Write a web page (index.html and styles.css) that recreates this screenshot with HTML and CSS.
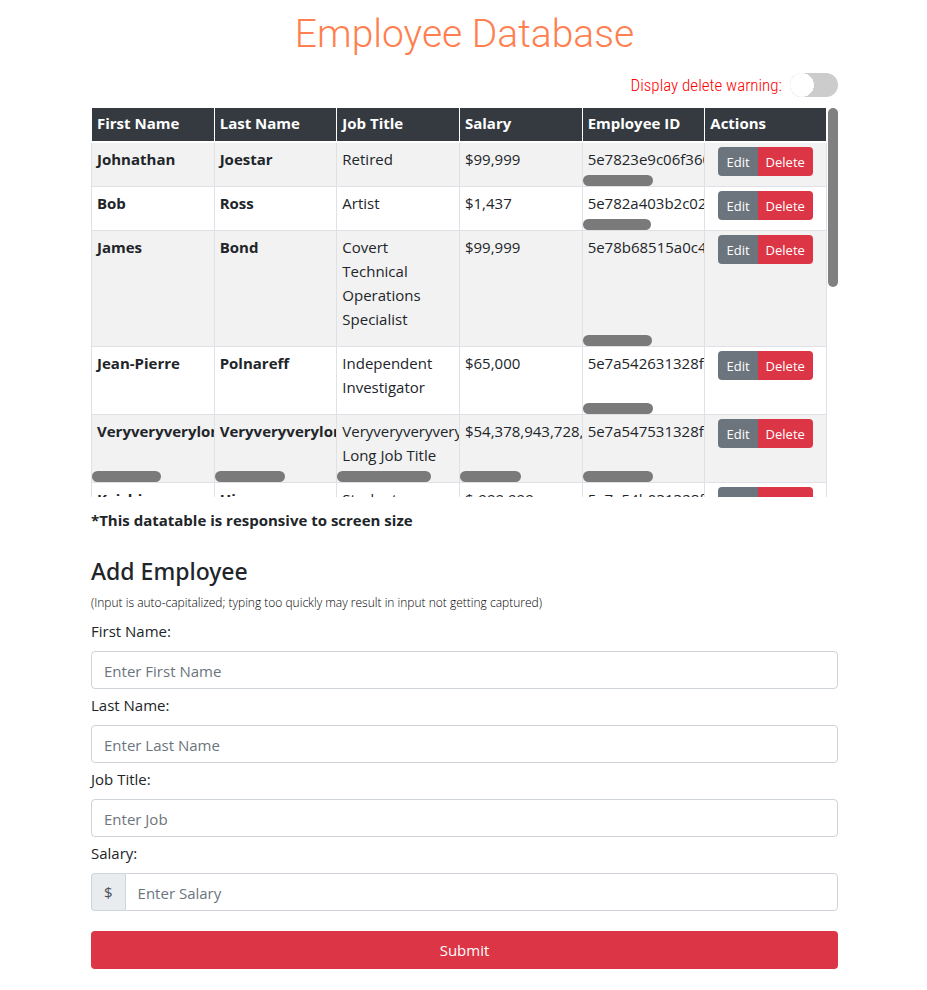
FILE: index.html
```html
<!DOCTYPE html>
<html lang="en">
<head>
<meta charset="utf-8">
<title>Employee Database</title>
<link rel="stylesheet" href="styles.css">
</head>
<body>
<main class="page">
  <h1 class="title">Employee Database</h1>
  <div class="warning">
    <label class="warning-label" for="warn">Display delete warning:</label>
    <input class="switch" id="warn" type="checkbox" role="switch">
  </div>
  <div class="table-view">
    <div class="table-body">
    <table class="employees">
      <thead>
        <tr><th>First Name</th><th>Last Name</th><th>Job Title</th><th>Salary</th><th>Employee ID</th><th>Actions</th></tr>
      </thead>
      <tbody>
        <tr>
          <td class="strong"><div class="cell">Johnathan</div></td>
          <td class="strong"><div class="cell">Joestar</div></td>
          <td><div class="cell">Retired</div></td>
          <td><div class="cell">$99,999</div></td>
          <td><div class="cell">5e7823e9c06f360</div><span class="thumb" style="width:58%"></span></td>
          <td><div class="actions"><button class="edit" type="button">Edit</button><button class="delete" type="button">Delete</button></div></td>
        </tr>
        <tr>
          <td class="strong"><div class="cell">Bob</div></td>
          <td class="strong"><div class="cell">Ross</div></td>
          <td><div class="cell">Artist</div></td>
          <td><div class="cell">$1,437</div></td>
          <td><div class="cell">5e782a403b2c02</div><span class="thumb" style="width:56%"></span></td>
          <td><div class="actions"><button class="edit" type="button">Edit</button><button class="delete" type="button">Delete</button></div></td>
        </tr>
        <tr>
          <td class="strong"><div class="cell">James</div></td>
          <td class="strong"><div class="cell">Bond</div></td>
          <td><div class="cell">Covert<br>Technical<br>Operations<br>Specialist</div></td>
          <td><div class="cell">$99,999</div></td>
          <td><div class="cell">5e78b68515a0c4</div><span class="thumb" style="width:57%"></span></td>
          <td><div class="actions"><button class="edit" type="button">Edit</button><button class="delete" type="button">Delete</button></div></td>
        </tr>
        <tr>
          <td class="strong"><div class="cell">Jean-Pierre</div></td>
          <td class="strong"><div class="cell">Polnareff</div></td>
          <td><div class="cell">Independent<br>Investigator</div></td>
          <td><div class="cell">$65,000</div></td>
          <td><div class="cell">5e7a542631328f</div><span class="thumb" style="width:58%"></span></td>
          <td><div class="actions"><button class="edit" type="button">Edit</button><button class="delete" type="button">Delete</button></div></td>
        </tr>
        <tr>
          <td class="strong"><div class="cell">Veryveryverylon</div><span class="thumb" style="width:57%"></span></td>
          <td class="strong"><div class="cell">Veryveryverylon</div><span class="thumb" style="width:58%"></span></td>
          <td><div class="cell">Veryveryveryvery<br>Long Job Title</div><span class="thumb" style="width:77%"></span></td>
          <td><div class="cell">$54,378,943,728,</div><span class="thumb" style="width:50%"></span></td>
          <td><div class="cell">5e7a547531328f</div><span class="thumb" style="width:58%"></span></td>
          <td><div class="actions"><button class="edit" type="button">Edit</button><button class="delete" type="button">Delete</button></div></td>
        </tr>
        <tr>
          <td class="strong"><div class="cell">Keishin</div></td>
          <td class="strong"><div class="cell">Hiro</div></td>
          <td><div class="cell">Student</div></td>
          <td><div class="cell">$-999,999</div></td>
          <td><div class="cell">5e7a54b031328f</div><span class="thumb" style="width:58%"></span></td>
          <td><div class="actions"><button class="edit" type="button">Edit</button><button class="delete" type="button">Delete</button></div></td>
        </tr>
      </tbody>
    </table>
    </div>
    <div class="track"><div class="track-thumb"></div></div>
  </div>
  <p class="note">*This datatable is responsive to screen size</p>
  <h2 class="subtitle">Add Employee</h2>
  <p class="hint">(Input is auto-capitalized; typing too quickly may result in input not getting captured)</p>
  <form class="form">
    <label for="first">First Name:</label>
    <input class="field" id="first" type="text" placeholder="Enter First Name">
    <label for="last">Last Name:</label>
    <input class="field" id="last" type="text" placeholder="Enter Last Name">
    <label for="job">Job Title:</label>
    <input class="field" id="job" type="text" placeholder="Enter Job">
    <label for="salary">Salary:</label>
    <div class="group">
      <span class="prefix">$</span>
      <input class="field" id="salary" type="text" placeholder="Enter Salary">
    </div>
    <button class="submit" type="submit">Submit</button>
  </form>
</main>
</body>
</html>
```
FILE: styles.css
```css
* { box-sizing: border-box; }

body {
  margin: 0;
  background: #fff;
  color: #212529;
  font: 15px/24px "Open Sans", "Noto Sans", sans-serif;
}

.page { padding: 10px 89px 20px 91px; }

.title {
  margin: 0;
  color: coral;
  font: 300 39px/48px Roboto, sans-serif;
  text-align: center;
}

.warning {
  display: flex;
  justify-content: flex-end;
  align-items: center;
  gap: 8px;
  height: 24px;
  margin: 15px 0 11px;
}

.warning-label {
  color: red;
  font: 300 17px/24px "Roboto Condensed", Roboto, sans-serif;
}

.switch {
  appearance: none;
  width: 48px;
  height: 24px;
  margin: 0;
  border-radius: 12px;
  background: radial-gradient(circle at 12px 12px, #fff 11px, #f4f4f4 12px, #ccc 12px);
}

.table-view {
  display: flex;
  gap: 1px;
  height: 389px;
  overflow: hidden;
}

.table-body { flex: 1; min-width: 0; }

.employees {
  width: 100%;
  table-layout: fixed;
  border-spacing: 0;
}

th {
  padding: 3px 0 6px 5px;
  border-left: 1px solid #fff;
  border-bottom: 2px solid #fff;
  background: #343a40;
  background-clip: padding-box;
  color: #fff;
  text-align: left;
}

th:last-child { border-right: 1px solid #fff; }

td {
  position: relative;
  padding: 0;
  border-left: 1px solid #dee2e6;
  border-bottom: 1px solid #dee2e6;
  vertical-align: top;
}

td:last-child { border-right: 1px solid #dee2e6; }

tbody tr:nth-child(odd) { background: #f2f2f2; }

.strong { font-weight: 700; }

.cell {
  overflow: hidden;
  padding: 4px 0 15px 5px;
  white-space: nowrap;
}

.thumb {
  position: absolute;
  left: 0;
  bottom: 0;
  height: 11px;
  border-radius: 6px;
  background: #7a7a7a;
}

.actions {
  display: flex;
  justify-content: center;
  padding-top: 4px;
}

button {
  border: 0;
  color: #fff;
  font: inherit;
}

.actions button {
  height: 29px;
  padding: 0 8px;
  font-size: 13px;
}

.edit { background: #6c757d; border-radius: 4px 0 0 4px; }
.delete { background: #dc3545; border-radius: 0 4px 4px 0; }

.track { width: 10px; }

.track-thumb {
  height: 46%;
  border-radius: 5px;
  background: #808080;
}

.note { margin: 11px 0 0; font-weight: 700; }

.subtitle {
  margin: 23px 0 0;
  font-family: "Noto Sans", sans-serif;
  font-size: 23px;
  font-weight: 500;
  line-height: 32px;
}

.hint {
  margin: 4px 0;
  color: #000;
  font-size: 12px;
  font-weight: 300;
}

.form { display: flex; flex-direction: column; }

.form label { margin-bottom: 8px; }

.field {
  width: 100%;
  height: 38px;
  margin-bottom: 4px;
  padding: 2px 12px 0;
  border: 1px solid #ced4da;
  border-radius: 4px;
  background: #fff;
  color: #495057;
  font: inherit;
}

.field::placeholder { color: #6c757d; opacity: 1; }

.group { display: flex; margin-bottom: 20px; }

.group .field { margin: 0; border-radius: 0 4px 4px 0; }

.prefix {
  padding: 6px 12px;
  border: 1px solid #ced4da;
  border-right: 0;
  border-radius: 4px 0 0 4px;
  background: #e9ecef;
  color: #495057;
}

.submit {
  height: 38px;
  border-radius: 4px;
  background: #dc3545;
}
```
